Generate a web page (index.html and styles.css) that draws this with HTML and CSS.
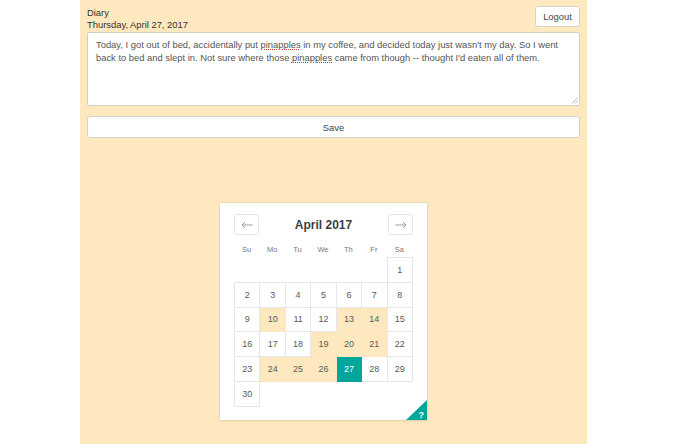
FILE: index.html
```html
<!DOCTYPE html>
<html>
<head>
<meta charset="utf-8">
<link rel="stylesheet" href="styles.css">
</head>
<body>
<div class="page">
  <main class="diary">
    <header class="top">
      <div class="titles">
        <div class="app">Diary</div>
        <div class="date">Thursday, April 27, 2017</div>
      </div>
      <button class="btn logout">Logout</button>
    </header>
    <div class="entry">Today, I got out of bed, accidentally put <span class="sp">pinapples</span> in my coffee, and decided today just wasn't my day. So I went back to bed and slept in. Not sure where those <span class="sp">pinapples</span> came from though -- thought I'd eaten all of them.<svg class="grip" width="7" height="7" viewBox="0 0 7 7"><path d="M6.5 1 L1 6.5 M6.5 4 L4 6.5" stroke="#999" stroke-width="0.8" fill="none"/></svg></div>
    <button class="btn save">Save</button>
    <div class="calwrap">
      <div class="cal">
        <div class="calhead">
          <button class="nav"><svg width="12" height="8" viewBox="0 0 12 8"><path d="M11.5 4 H1 M4 1 L1 4 L4 7" stroke="#82888a" stroke-width="0.8" fill="none"/></svg></button>
          <div class="month">April 2017</div>
          <button class="nav"><svg width="12" height="8" viewBox="0 0 12 8"><path d="M0.5 4 H11 M8 1 L11 4 L8 7" stroke="#82888a" stroke-width="0.8" fill="none"/></svg></button>
        </div>
        <div class="dow"><span>Su</span><span>Mo</span><span>Tu</span><span>We</span><span>Th</span><span>Fr</span><span>Sa</span></div>
        <table class="grid">
          <tr><td class="e"></td><td class="e"></td><td class="e"></td><td class="e"></td><td class="e"></td><td class="e"></td><td>1</td></tr>
          <tr><td>2</td><td>3</td><td>4</td><td>5</td><td>6</td><td>7</td><td>8</td></tr>
          <tr><td>9</td><td class="h">10</td><td>11</td><td>12</td><td class="h">13</td><td class="h">14</td><td>15</td></tr>
          <tr><td>16</td><td>17</td><td>18</td><td class="h">19</td><td class="h">20</td><td class="h">21</td><td>22</td></tr>
          <tr><td>23</td><td class="h">24</td><td class="h">25</td><td class="h">26</td><td class="s">27</td><td>28</td><td>29</td></tr>
          <tr><td>30</td><td class="e"></td><td class="e"></td><td class="e"></td><td class="e"></td><td class="e"></td><td class="e"></td></tr>
        </table>
        <div class="help"><span>?</span></div>
      </div>
    </div>
  </main>
</div>
</body>
</html>
```
FILE: styles.css
```css
html, body {
  margin: 0;
  padding: 0;
  background: #fff;
}
body {
  font-family: "Liberation Sans", Arial, sans-serif;
  color: #555;
}
.page {
  display: flex;
  height: 444px;
  overflow: hidden;
}
.diary {
  margin-left: 80px;
  width: 493px;
  background: #fee8bf;
  padding: 6px 7px 0 7px;
  display: flex;
  flex-direction: column;
}
.top {
  display: flex;
  justify-content: space-between;
  align-items: flex-start;
  height: 26px;
}
.titles {
  font-size: 9.4px;
  line-height: 12px;
  color: #333;
  padding-top: 1px;
}
.btn {
  font-family: "Liberation Sans", Arial, sans-serif;
  background: #fff;
  border: 1px solid #d9d2c4;
  border-radius: 3px;
  color: #444;
  font-size: 9.4px;
  cursor: pointer;
}
.logout {
  width: 45px;
  height: 21px;
  padding: 0;
}
.entry {
  position: relative;
  box-sizing: border-box;
  height: 74px;
  background: #fff;
  border: 1px solid #d5cfc3;
  border-radius: 2px;
  padding: 5px 8px;
  font-size: 9.4px;
  line-height: 13px;
  color: #555;
}
.sp {
  text-decoration: underline dotted #c0392b;
  text-underline-offset: 1px;
}
.grip {
  position: absolute;
  right: 1px;
  bottom: 1px;
}
.save {
  margin-top: 10px;
  height: 22px;
  width: 100%;
}
.calwrap {
  display: flex;
  padding-left: 133px;
  padding-top: 65px;
}
.cal {
  position: relative;
  width: 207px;
  height: 217px;
  box-sizing: border-box;
  background: #fff;
  box-shadow: 0 1px 3px rgba(0,0,0,0.08), 0 0 0 1px rgba(0,0,0,0.04);
  padding: 11px 14px 0 14px;
  overflow: hidden;
}
.calhead {
  display: flex;
  justify-content: space-between;
  align-items: center;
  height: 21px;
}
.nav {
  width: 25px;
  height: 21px;
  border: 1px solid #e4e7e7;
  border-radius: 3px;
  background: #fff;
  padding: 0;
  display: flex;
  align-items: center;
  justify-content: center;
}
.month {
  font-weight: bold;
  font-size: 12px;
  color: #3c3f40;
  padding-top: 1px;
}
.dow {
  display: grid;
  grid-template-columns: repeat(7, 1fr);
  width: 178px;
  margin-top: 10px;
  font-size: 7.5px;
  color: #777;
  text-align: center;
  height: 12px;
}
.grid {
  border-collapse: collapse;
  table-layout: fixed;
  width: 179px;
  margin-top: 0;
}
.grid td {
  border: 1px solid #e4e7e7;
  height: 23.8px;
  padding: 0;
  text-align: center;
  font-size: 9px;
  color: #565a5c;
}
.grid td.e {
  border: none;
}
.grid td.h {
  background: #fee8bf;
  border-color: #fee8bf;
}
.grid td.s {
  background: #00a699;
  border-color: #00a699;
  color: #fff;
}
.help {
  position: absolute;
  right: 0;
  bottom: 0;
  width: 0;
  height: 0;
  border-left: 21px solid transparent;
  border-bottom: 20px solid #00a699;
}
.help span {
  position: absolute;
  right: 3px;
  bottom: -21px;
  color: #fff;
  font-size: 9px;
  font-weight: bold;
  line-height: 12px;
}
```
